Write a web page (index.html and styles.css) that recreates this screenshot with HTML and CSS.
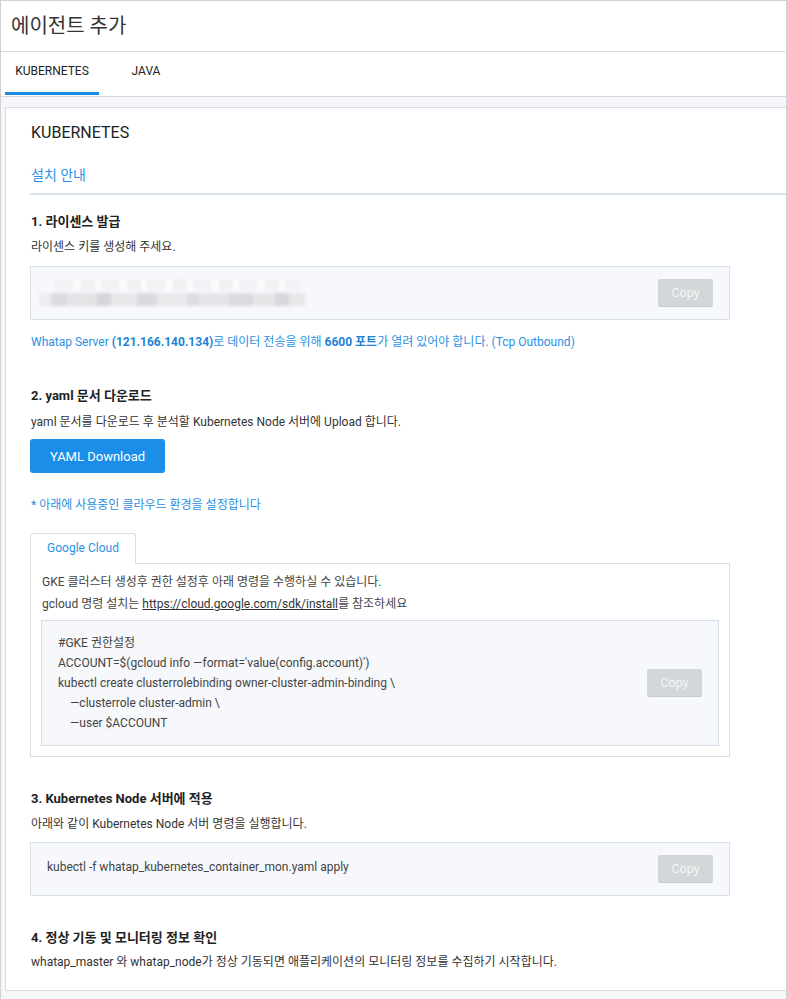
FILE: index.html
```html
<!DOCTYPE html>
<html lang="ko">
<head>
<meta charset="utf-8">
<title>에이전트 추가</title>
<link rel="stylesheet" href="styles.css">
</head>
<body>
<div class="frame">
  <header class="page-header">
    <h1 class="page-title">에이전트 추가</h1>
  </header>
  <nav class="tabs">
    <div class="tab active">KUBERNETES</div>
    <div class="tab">JAVA</div>
  </nav>
  <main class="content">
    <section class="card">
      <h2 class="card-title">KUBERNETES</h2>
      <div class="guide-head">설치 안내</div>

      <h3 class="step-title first">1. 라이센스 발급</h3>
      <p class="step-desc">라이센스 키를 생성해 주세요.</p>
      <div class="copy-box">
        <div class="blur-key"><span class="k1"></span><span class="k2"></span></div>
        <button class="copy-btn">Copy</button>
      </div>
      <p class="notice">Whatap Server <b>(121.166.140.134)</b>로 데이터 전송을 위해 <b>6600 포트</b>가 열려 있어야 합니다. (Tcp Outbound)</p>

      <h3 class="step-title s2">2. yaml 문서 다운로드</h3>
      <p class="step-desc d2">yaml 문서를 다운로드 후 분석할 Kubernetes Node 서버에 Upload 합니다.</p>
      <button class="primary-btn">YAML Download</button>
      <p class="notice note2">* 아래에 사용중인 클라우드 환경을 설정합니다</p>

      <div class="cloud-tabs">
        <div class="cloud-tab">Google Cloud</div>
      </div>
      <div class="cloud-panel">
        <p class="panel-text">GKE 클러스터 생성후 권한 설정후 아래 명령을 수행하실 수 있습니다.</p>
        <p class="panel-text">gcloud 명령 설치는 <a class="plain-link" href="#">https://cloud.google.com/sdk/install</a>를 참조하세요</p>
        <div class="code-box">
          <div class="code-lines">
            <div>#GKE 권한설정</div>
            <div>ACCOUNT=$(gcloud info —format='value(config.account)')</div>
            <div>kubectl create clusterrolebinding owner-cluster-admin-binding \</div>
            <div class="indent">—clusterrole cluster-admin \</div>
            <div class="indent">—user $ACCOUNT</div>
          </div>
          <button class="copy-btn">Copy</button>
        </div>
      </div>

      <h3 class="step-title s3">3. Kubernetes Node 서버에 적용</h3>
      <p class="step-desc">아래와 같이 Kubernetes Node 서버 명령을 실행합니다.</p>
      <div class="copy-box cmd-box">
        <div class="cmd">kubectl -f whatap_kubernetes_container_mon.yaml apply</div>
        <button class="copy-btn">Copy</button>
      </div>

      <h3 class="step-title s4">4. 정상 기동 및 모니터링 정보 확인</h3>
      <p class="step-desc d4">whatap_master 와 whatap_node가 정상 기동되면 애플리케이션의 모니터링 정보를 수집하기 시작합니다.</p>
    </section>
  </main>
</div>
</body>
</html>
```

FILE: styles.css
```css
* { box-sizing: border-box; }
html, body { margin: 0; padding: 0; }
body {
  font-family: Roboto, "Noto Sans CJK KR", sans-serif;
  color: #333;
  background: #fff;
}
.frame {
  width: 787px;
  height: 999px;
  border: 1px solid #d2d2d2;
  border-bottom: none;
  display: flex;
  flex-direction: column;
  overflow: hidden;
}
.page-header {
  height: 51px;
  border-bottom: 1px solid #d8dce0;
  display: flex;
  align-items: center;
  padding-left: 10px;
}
.page-title {
  margin: 0 0 4px;
  font-size: 20px;
  font-weight: 400;
  color: #333;
}
.tabs {
  display: flex;
  height: 45px;
  padding-left: 4px;
  border-bottom: 1px solid #d6d9dc;
}
.tab {
  width: 94px;
  text-align: center;
  font-size: 12px;
  color: #222;
  padding-top: 12px;
  margin-bottom: 1px;
  border-bottom: 3px solid transparent;
}
.tab.active { border-bottom-color: #1a8ce6; }
.content {
  flex: 1;
  background: #f5f7fa;
  padding: 10px 0 0 4px;
}
.card {
  background: #fff;
  border: 1px solid #d5dde5;
  border-right: none;
  height: 884px;
  padding: 15px 0 0 24px;
}
.card-title {
  margin: 0 0 0 1px;
  font-size: 16px;
  line-height: 20px;
  font-weight: 400;
  color: #222;
}
.guide-head {
  margin-top: 22px;
  font-size: 14px;
  line-height: 20px;
  color: #2b90e3;
  padding: 0 0 8px 1px;
  border-bottom: 2px solid #dae2ea;
}
.step-title {
  margin: 0;
  font-size: 13px;
  line-height: 20px;
  font-weight: 700;
  color: #222;
  padding-left: 1px;
}
.step-title.first { margin-top: 17px; }
.step-title.s2 { margin-top: 34px; }
.step-title.s3 { margin-top: 32px; }
.step-title.s4 { margin-top: 32px; }
.step-desc {
  margin: 5px 0 0;
  font-size: 12px;
  line-height: 20px;
  color: #333;
  padding-left: 1px;
}
.step-desc.d2 { margin-top: 6px; }
.step-desc.d4 { margin-top: 4px; }
.copy-box {
  width: 700px;
  height: 54px;
  margin-top: 9px;
  background: #f6f8fb;
  border: 1px solid #d6e0e8;
  display: flex;
  align-items: center;
  justify-content: space-between;
  padding: 0 16px 0 8px;
}
.cmd-box { margin-top: 8px; padding-left: 16px; align-items: flex-start; }
.cmd-box .copy-btn { margin-top: 12px; }
.cmd {
  font-size: 12px;
  line-height: 20px;
  color: #444;
  margin-top: 14px;
}
.blur-key {
  position: relative;
  width: 266px;
  height: 30px;
  filter: blur(1.5px);
}
.blur-key .k1 {
  position: absolute;
  left: 16px; top: 2px;
  width: 245px; height: 10px;
  background: repeating-linear-gradient(90deg, #f1f2f4 0 18px, #fafbfc 18px 26px, #eef0f2 26px 40px, #fafbfc 40px 46px);
}
.blur-key .k2 {
  position: absolute;
  left: 0; top: 15px;
  width: 266px; height: 13px;
  background: linear-gradient(90deg, #eceef0 0 12px, #dadcdf 12px 28px, #e2e4e6 28px 58px, #d4d6d9 58px 72px, #e6e8ea 72px 98px, #d8dadd 98px 118px, #e8e9eb 118px 148px, #dcdee1 148px 160px, #e3e5e8 160px 190px, #d9dbde 190px 214px, #e4e6e8 214px 236px, #d6d8db 236px 250px, #e6e8ea 250px 266px);
}
.copy-btn {
  width: 55px;
  height: 28px;
  border: none;
  border-bottom: 1px solid #c4c9cd;
  border-radius: 2px;
  background: #d3d7da;
  color: #f3f5f6;
  font-family: Roboto, "Noto Sans CJK KR", sans-serif;
  font-size: 12.5px;
  padding: 0;
}
.notice {
  margin: 12px 0 0;
  font-size: 12px;
  line-height: 20px;
  color: #2b90e3;
  padding-left: 1px;
}
.notice b { font-weight: 700; color: #1d83d6; }
.note2 { margin-top: 22px; }
.primary-btn {
  display: block;
  margin-top: 7px;
  width: 135px;
  height: 34px;
  border: none;
  border-radius: 3px;
  background: #1a8ee9;
  color: #fff;
  font-family: Roboto, "Noto Sans CJK KR", sans-serif;
  font-size: 13px;
  padding: 0;
}
.cloud-tabs {
  display: flex;
  margin-top: 18px;
}
.cloud-tab {
  width: 106px;
  height: 31px;
  border: 1px solid #d6e0e8;
  border-bottom: none;
  border-radius: 3px 3px 0 0;
  background: #fff;
  color: #2b90e3;
  font-size: 12px;
  text-align: center;
  line-height: 29px;
  position: relative;
  z-index: 1;
  margin-bottom: -1px;
}
.cloud-panel {
  width: 700px;
  border: 1px solid #d6e0e8;
  padding: 7px 10px 10px;
}
.panel-text {
  margin: 0;
  font-size: 12px;
  line-height: 22px;
  color: #444;
  padding-left: 1px;
}
.plain-link { color: #333; text-decoration: underline; }
.code-box {
  margin-top: 5px;
  height: 126px;
  background: #f6f8fb;
  border: 1px solid #d6e0e8;
  display: flex;
  align-items: center;
  justify-content: space-between;
  padding: 0 16px 0 16px;
}
.code-lines {
  font-size: 12px;
  line-height: 20px;
  color: #444;
  align-self: flex-start;
  padding-top: 12px;
}
.code-lines .indent { padding-left: 12px; }
```
